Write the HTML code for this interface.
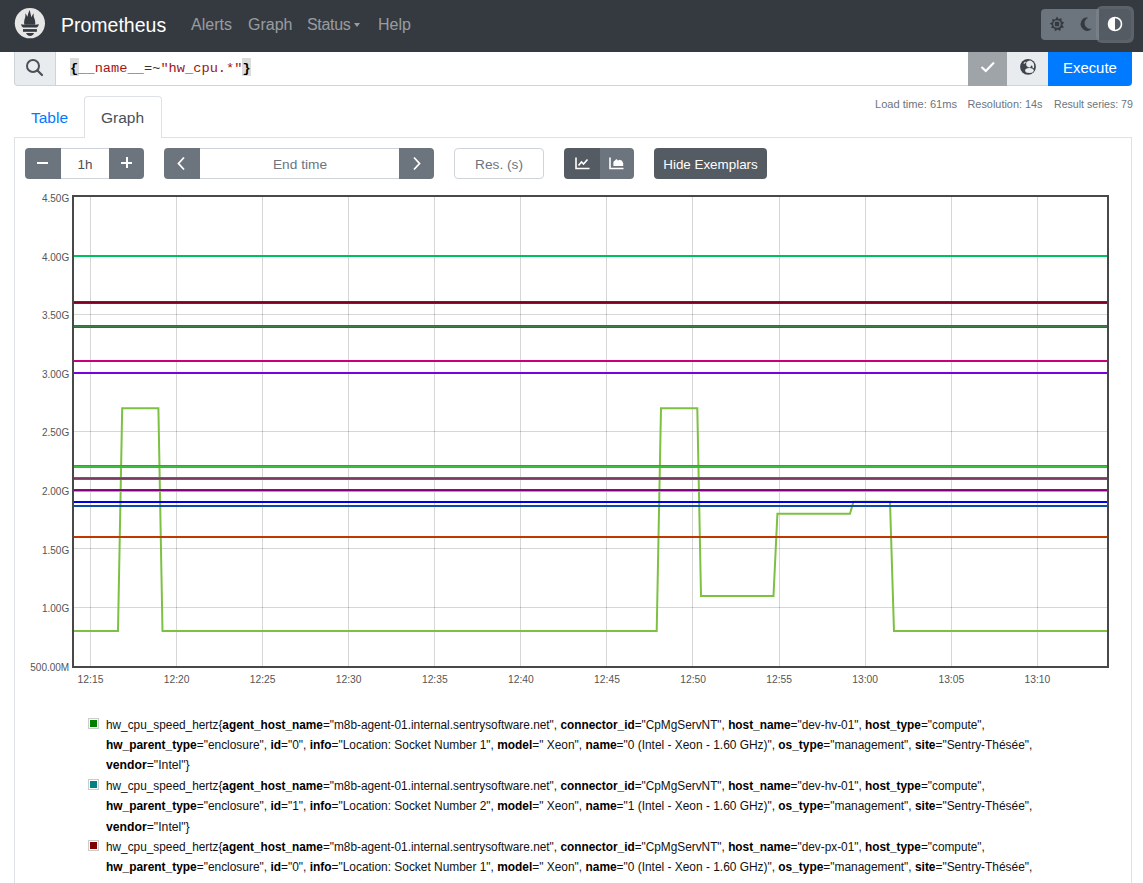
<!DOCTYPE html>
<html><head><meta charset="utf-8">
<style>
*{box-sizing:border-box;margin:0;padding:0}
html,body{width:1143px;height:883px;overflow:hidden;background:#fff;font-family:"Liberation Sans",sans-serif;color:#212529}
.abs{position:absolute}
#nav{position:absolute;left:0;top:0;width:1143px;height:52px;background:#343a40}
.brand{position:absolute;left:61px;top:14px;font-size:19.5px;color:#fff;white-space:nowrap;line-height:22px}
.nl{position:absolute;top:16px;font-size:16px;color:rgba(255,255,255,.5);white-space:nowrap;line-height:18px}
.txt{position:absolute;white-space:nowrap}
.yl{position:absolute;right:1073.8px;font-size:10px;line-height:13px;color:#555;white-space:nowrap;text-align:right}
.xl{position:absolute;top:673px;width:40px;text-align:center;font-size:10.3px;line-height:13px;color:#555;white-space:nowrap}
.btn{position:absolute;background:#6c757d}
.lg{position:absolute;left:105.5px;white-space:nowrap;font-size:12.5px;line-height:20px;color:#111;transform-origin:0 0}
.lg b{color:#000}
.sw{position:absolute;left:88px;width:11px;height:11px;border:1px solid #ccc;padding:1px;background:#fff}
.sw i{display:block;width:7px;height:7px}
</style></head><body>
<div id="nav">
  <svg class="abs" style="left:12px;top:5px" width="36" height="36" viewBox="0 0 36 36">
    <circle cx="17.9" cy="18.2" r="15.1" fill="#e6e6e6"/>
    <path d="M12.3 19.8 C11.8 17 12.5 14 13.3 12 L13.5 8.3 L15.5 11.8 C16 9 16.8 7 17.5 5 C18.2 7 18.8 9 19.3 12.3 L21.5 8.3 L21.8 12 C22.8 14 23.6 17 23.2 19.8 Z" fill="#343a40"/>
    <path d="M9 19.2 L12.3 19.8 L23.2 19.8 L26.9 19.2 C26.5 21 25.5 22.2 24.5 22.6 L11.4 22.6 C10.4 22.2 9.4 21 9 19.2 Z" fill="#343a40"/>
    <rect x="11" y="24.1" width="13.9" height="2.7" fill="#343a40"/>
    <path d="M14.1 28 L22 28 C21.6 29.8 20 30.9 18 30.9 C16 30.9 14.5 29.8 14.1 28 Z" fill="#343a40"/>
  </svg>
  <div class="brand">Prometheus</div>
  <div class="nl" style="left:191px">Alerts</div>
  <div class="nl" style="left:248px">Graph</div>
  <div class="nl" style="left:307px;letter-spacing:-0.3px">Status</div>
  <div class="abs" style="left:354.3px;top:22.6px;width:0;height:0;border-left:3.6px solid transparent;border-right:3.6px solid transparent;border-top:4px solid rgba(255,255,255,.5)"></div>
  <div class="nl" style="left:378px">Help</div>
  <div class="abs" style="left:1041px;top:9px;width:90px;height:31px;background:#6c757d;border-radius:4px"></div>
  <div class="abs" style="left:1096px;top:6px;width:38px;height:37px;border-radius:6px;background:rgba(130,138,145,.5)"></div>
  <div class="abs" style="left:1099px;top:9px;width:32px;height:31px;background:#545b62;border-radius:0 4px 4px 0"></div>
  <svg class="abs" style="left:1049px;top:16px" width="16" height="16" viewBox="0 0 16 16"><path d="M8 0.5 L9.6 3 L12.6 2.3 L12.4 5.3 L15.2 6.5 L13.3 8.8 L14.9 11.4 L11.9 11.9 L11.2 14.9 L8.5 13.4 L6.1 15.2 L5.2 12.3 L2.2 12.1 L3.1 9.2 L0.7 7.4 L3.4 5.9 L3.3 2.9 L6.3 3.4 Z" fill="#343a40"/><circle cx="8" cy="8" r="3.8" fill="#6c757d"/><rect x="5.8" y="5.8" width="4.4" height="4.4" rx="0.8" fill="#343a40"/></svg>
  <svg class="abs" style="left:1080px;top:17px" width="13" height="14" viewBox="0 0 13 14"><path d="M8.5 0.8 A6.5 6.5 0 1 0 12 11.5 A5.2 5.2 0 0 1 8.5 0.8 Z" fill="#343a40"/></svg>
  <svg class="abs" style="left:1107px;top:16px" width="16" height="16" viewBox="0 0 16 16"><circle cx="8" cy="8" r="6.5" fill="#545b62" stroke="#fff" stroke-width="1.6"/><path d="M8 1.5 A6.5 6.5 0 0 0 8 14.5 Z" fill="#fff"/></svg>
</div>

<!-- query input group -->
<div class="abs" style="left:14px;top:52px;width:42px;height:34px;background:#e9ecef;border:1px solid #ced4da;border-top:none;border-radius:0 0 0 4px"></div>
<svg class="abs" style="left:25px;top:58px" width="20" height="20" viewBox="0 0 20 20"><circle cx="8" cy="8" r="6" fill="none" stroke="#495057" stroke-width="2"/><line x1="12.5" y1="12.5" x2="17" y2="17" stroke="#495057" stroke-width="2.2" stroke-linecap="round"/></svg>
<div class="abs" style="left:55px;top:52px;width:914px;height:34px;background:#fff;border-bottom:1px solid #ced4da;border-left:1px solid #ced4da"></div>
<div class="abs" style="left:70px;top:58px;width:9px;height:18px;background:#dcdcdc"></div>
<div class="abs" style="left:242px;top:58px;width:9px;height:18px;background:#dcdcdc"></div>
<div class="txt" style="left:70px;top:60.5px;font-family:'Liberation Mono',monospace;font-size:13.7px;line-height:16px;color:#a31515"><b style="color:#000">{</b>__name__<span style="color:#333">=~</span>"hw_cpu.*"<b style="color:#000">}</b></div>
<div class="abs" style="left:968px;top:52px;width:39px;height:34px;background:#9fa4a9"></div>
<svg class="abs" style="left:978px;top:59px" width="20" height="16" viewBox="0 0 20 16"><path d="M3.5 8 L7.8 12 L16 3.5" fill="none" stroke="#fff" stroke-width="2.1"/></svg>
<div class="abs" style="left:1007px;top:52px;width:41px;height:34px;background:#e9ecef;border-bottom:1px solid #ced4da"></div>
<svg class="abs" style="left:1020px;top:59px" width="16" height="16" viewBox="0 0 16 16"><circle cx="8" cy="7.9" r="7.9" fill="#3d444b"/><path d="M6.3 3.6 C7 2.6 8.5 1.6 10 1.5 C11.5 1.8 12.8 2.8 13.6 4 C14.3 5.5 14.3 7.5 13.9 9.2 L12.6 8.8 L12.3 6.8 L11 6.4 L10.6 8.2 L9.2 8.4 C8 8.3 7.3 7.5 6.6 7 C6.1 6 6.1 4.6 6.3 3.6 Z" fill="#e9ecef"/><ellipse cx="9.4" cy="11.4" rx="4.3" ry="2.5" fill="#e9ecef"/><path d="M3.8 4.6 L5.6 2.8" stroke="#e9ecef" stroke-width="1.1"/></svg>
<div class="abs" style="left:1048px;top:52px;width:84px;height:34px;background:#007bff;border-radius:0 0 4px 0"></div>
<div class="txt" style="left:1063px;top:59px;font-size:14.9px;line-height:18px;color:#fff">Execute</div>

<!-- status -->
<div class="txt" style="left:875px;top:96.5px;font-size:11.1px;line-height:13px;color:#6c757d;margin-top:1px">Load time: 61ms</div>
<div class="txt" style="left:967.5px;top:96.8px;font-size:10.9px;line-height:13px;color:#6c757d;margin-top:1px">Resolution: 14s</div>
<div class="txt" style="left:1054px;top:97px;font-size:10.6px;line-height:13px;color:#6c757d;margin-top:1px">Result series: 79</div>

<!-- tabs -->
<div class="txt" style="left:31px;top:109px;font-size:15.5px;line-height:18px;color:#007bff">Table</div>
<div class="abs" style="left:84px;top:96px;width:78px;height:42px;background:#fff;border:1px solid #dee2e6;border-bottom:none;border-radius:4px 4px 0 0"></div>
<div class="txt" style="left:101px;top:109px;font-size:15.5px;line-height:18px;color:#495057">Graph</div>
<div class="abs" style="left:14px;top:137px;width:70px;height:1px;background:#dee2e6"></div>
<div class="abs" style="left:162px;top:137px;width:970px;height:1px;background:#dee2e6"></div>
<div class="abs" style="left:14px;top:137px;width:1px;height:760px;background:#dee2e6"></div>
<div class="abs" style="left:1131px;top:137px;width:1px;height:760px;background:#dee2e6"></div>

<!-- controls -->
<div class="btn" style="left:25px;top:148px;width:36px;height:31px;border-radius:4px 0 0 4px"></div>
<div class="abs" style="left:37px;top:162px;width:11px;height:2px;background:#fff"></div>
<div class="abs" style="left:61px;top:148px;width:48px;height:31px;border-top:1px solid #ced4da;border-bottom:1px solid #ced4da"></div>
<div class="txt" style="left:61px;top:156.7px;width:48px;text-align:center;font-size:13.5px;line-height:16px;color:#495057">1h</div>
<div class="btn" style="left:109px;top:148px;width:35px;height:31px;border-radius:0 4px 4px 0"></div>
<div class="abs" style="left:121px;top:162px;width:11px;height:2px;background:#fff"></div>
<div class="abs" style="left:125.5px;top:156.7px;width:2px;height:11px;background:#fff"></div>
<div class="btn" style="left:164px;top:148px;width:36px;height:31px;border-radius:4px 0 0 4px"></div>
<svg class="abs" style="left:176px;top:156px" width="10" height="15" viewBox="0 0 10 15"><path d="M8 1.5 L2.5 7.5 L8 13.5" stroke="#fff" stroke-width="1.8" fill="none"/></svg>
<div class="abs" style="left:200px;top:148px;width:200px;height:31px;border-top:1px solid #ced4da;border-bottom:1px solid #ced4da"></div>
<div class="txt" style="left:200px;top:156.7px;width:200px;text-align:center;font-size:13.7px;line-height:16px;color:#6c757d">End time</div>
<div class="btn" style="left:399px;top:148px;width:35px;height:31px;border-radius:0 4px 4px 0"></div>
<svg class="abs" style="left:412px;top:156px" width="10" height="15" viewBox="0 0 10 15"><path d="M2 1.5 L7.5 7.5 L2 13.5" stroke="#fff" stroke-width="1.8" fill="none"/></svg>
<div class="abs" style="left:454px;top:148px;width:90px;height:31px;border:1px solid #ced4da;border-radius:4px"></div>
<div class="txt" style="left:454px;top:156.7px;width:90px;text-align:center;font-size:13.7px;line-height:16px;color:#6c757d">Res. (s)</div>
<div class="abs" style="left:564px;top:148px;width:36px;height:31px;background:#545b62;border-radius:4px 0 0 4px"></div>
<div class="abs" style="left:600px;top:148px;width:34px;height:31px;background:#6c757d;border-radius:0 4px 4px 0"></div>
<svg class="abs" style="left:574.5px;top:157px" width="15" height="13" viewBox="0 0 15 13"><path d="M1 0.5 V11.5 H14.5" stroke="#fff" stroke-width="1.6" fill="none"/><path d="M3.5 8.5 L6.5 5 L8.5 7 L12.5 2.5" stroke="#fff" stroke-width="1.6" fill="none"/></svg>
<svg class="abs" style="left:609px;top:157px" width="15" height="13" viewBox="0 0 15 13"><path d="M1 0.5 V11.5 H14.5" stroke="#fff" stroke-width="1.6" fill="none"/><path d="M4.4 9 V5.3 Q4.6 4 6 3.5 L7.3 2 L9 3.6 L10.7 2.8 Q13.6 3.3 14.2 6.2 V9 Z" fill="#fff"/></svg>
<div class="abs" style="left:654px;top:148px;width:113px;height:31px;background:#545b62;border-radius:4px"></div>
<div class="txt" style="left:654px;top:156.7px;width:113px;text-align:center;font-size:13.4px;line-height:16px;color:#fff">Hide Exemplars</div>
<svg class="abs" style="left:0;top:0" width="1143" height="883" viewBox="0 0 1143 883">
<path d="M90.5 197V666 M176.5 197V666 M262.5 197V666 M348.5 197V666 M434.5 197V666 M520.5 197V666 M606.5 197V666 M692.5 197V666 M779.5 197V666 M865.5 197V666 M951.5 197V666 M1037.5 197V666" stroke="#000" stroke-opacity=".16" stroke-width="1" fill="none"/>
<path d="M74 256.5H1107 M74 314.5H1107 M74 373.5H1107 M74 431.5H1107 M74 490.5H1107 M74 548.5H1107 M74 607.5H1107" stroke="#000" stroke-opacity=".16" stroke-width="1" fill="none"/>
<path d="M74 631 L118 631 L122.2 408.3 L158.4 408.3 L162.5 631 L656.7 631 L661 408.3 L697.3 408.3 L701 595.9 L773.5 595.9 L777.4 513.8 L850 513.8 L853.4 501.8 L890 501.8 L894 631 L1107 631" stroke="#7dc142" stroke-width="2" fill="none" stroke-linejoin="miter"/>
<path d="M74 255.5H1107" stroke="#00bf60" stroke-width="1" fill="none"/>
<path d="M74 256.5H1107" stroke="#00bf60" stroke-width="1" fill="none"/>
<path d="M74 301.5H1107" stroke="#4b3048" stroke-width="1" fill="none"/>
<path d="M74 302.5H1107" stroke="#800022" stroke-width="1" fill="none"/>
<path d="M74 303.5H1107" stroke="#4b3048" stroke-width="1" fill="none"/>
<path d="M74 325.5H1107" stroke="#307535" stroke-width="1" fill="none"/>
<path d="M74 326.5H1107" stroke="#3f7f45" stroke-width="1" fill="none"/>
<path d="M74 327.5H1107" stroke="#347800" stroke-width="1" fill="none"/>
<path d="M74 360.5H1107" stroke="#c8007e" stroke-width="1" fill="none"/>
<path d="M74 361.5H1107" stroke="#c8007e" stroke-width="1" fill="none"/>
<path d="M74 372.5H1107" stroke="#7a00e0" stroke-width="1" fill="none"/>
<path d="M74 373.5H1107" stroke="#7a00e0" stroke-width="1" fill="none"/>
<path d="M74 465.5H1107" stroke="#707a72" stroke-width="1" fill="none"/>
<path d="M74 466.5H1107" stroke="#3cbf3c" stroke-width="1" fill="none"/>
<path d="M74 467.5H1107" stroke="#3cb83c" stroke-width="1" fill="none"/>
<path d="M74 477.5H1107" stroke="#4a6a9a" stroke-width="1" fill="none"/>
<path d="M74 478.5H1107" stroke="#7a3a60" stroke-width="1" fill="none"/>
<path d="M74 479.5H1107" stroke="#4a6a9a" stroke-width="1" fill="none"/>
<path d="M74 489.5H1107" stroke="#880a88" stroke-width="1" fill="none"/>
<path d="M74 490.5H1107" stroke="#800080" stroke-width="1" fill="none"/>
<path d="M74 491.5H1107" stroke="#c09a90" stroke-width="1" fill="none"/>
<path d="M74 501.5H1107" stroke="#0000e0" stroke-width="1" fill="none"/>
<path d="M74 502.5H1107" stroke="#0000e0" stroke-width="1" fill="none"/>
<path d="M74 505.5H1107" stroke="#0050b8" stroke-width="1" fill="none"/>
<path d="M74 506.5H1107" stroke="#1048a8" stroke-width="1" fill="none"/>
<path d="M74 536.5H1107" stroke="#c03800" stroke-width="1" fill="none"/>
<path d="M74 537.5H1107" stroke="#c03800" stroke-width="1" fill="none"/>
<rect x="73" y="196" width="1035" height="471" stroke="#484848" stroke-width="2" fill="none"/>
</svg>
<div class="yl" style="top:192.0px">4.50G</div>
<div class="yl" style="top:250.6px">4.00G</div>
<div class="yl" style="top:309.2px">3.50G</div>
<div class="yl" style="top:367.8px">3.00G</div>
<div class="yl" style="top:426.4px">2.50G</div>
<div class="yl" style="top:485.0px">2.00G</div>
<div class="yl" style="top:543.6px">1.50G</div>
<div class="yl" style="top:602.2px">1.00G</div>
<div class="yl" style="top:660.8px">500.00M</div>
<div class="xl" style="left:70.5px">12:15</div>
<div class="xl" style="left:156.6px">12:20</div>
<div class="xl" style="left:242.7px">12:25</div>
<div class="xl" style="left:328.7px">12:30</div>
<div class="xl" style="left:414.8px">12:35</div>
<div class="xl" style="left:500.9px">12:40</div>
<div class="xl" style="left:587.0px">12:45</div>
<div class="xl" style="left:673.1px">12:50</div>
<div class="xl" style="left:759.1px">12:55</div>
<div class="xl" style="left:845.2px">13:00</div>
<div class="xl" style="left:931.3px">13:05</div>
<div class="xl" style="left:1017.4px">13:10</div>
<!-- legend -->
<div class="sw" style="top:717.9px"><i style="background:#008000"></i></div>
<div class="lg" style="top:715.1px;transform:scaleX(0.946)">hw_cpu_speed_hertz{<b>agent_host_name</b>="m8b-agent-01.internal.sentrysoftware.net", <b>connector_id</b>="CpMgServNT", <b>host_name</b>="dev-hv-01", <b>host_type</b>="compute",</div>
<div class="lg" style="top:735.2px;transform:scaleX(0.953)"><b>hw_parent_type</b>="enclosure", <b>id</b>="0", <b>info</b>="Location: Socket Number 1", <b>model</b>=" Xeon", <b>name</b>="0 (Intel - Xeon - 1.60 GHz)", <b>os_type</b>="management", <b>site</b>="Sentry-Thésée",</div>
<div class="lg" style="top:755.3px;transform:scaleX(0.977)"><b>vendor</b>="Intel"}</div>
<div class="sw" style="top:779.1px"><i style="background:#008080"></i></div>
<div class="lg" style="top:776.3px;transform:scaleX(0.946)">hw_cpu_speed_hertz{<b>agent_host_name</b>="m8b-agent-01.internal.sentrysoftware.net", <b>connector_id</b>="CpMgServNT", <b>host_name</b>="dev-hv-01", <b>host_type</b>="compute",</div>
<div class="lg" style="top:796.4px;transform:scaleX(0.953)"><b>hw_parent_type</b>="enclosure", <b>id</b>="1", <b>info</b>="Location: Socket Number 2", <b>model</b>=" Xeon", <b>name</b>="1 (Intel - Xeon - 1.60 GHz)", <b>os_type</b>="management", <b>site</b>="Sentry-Thésée",</div>
<div class="lg" style="top:816.5px;transform:scaleX(0.977)"><b>vendor</b>="Intel"}</div>
<div class="sw" style="top:840.1px"><i style="background:#800000"></i></div>
<div class="lg" style="top:837.3px;transform:scaleX(0.946)">hw_cpu_speed_hertz{<b>agent_host_name</b>="m8b-agent-01.internal.sentrysoftware.net", <b>connector_id</b>="CpMgServNT", <b>host_name</b>="dev-px-01", <b>host_type</b>="compute",</div>
<div class="lg" style="top:857.4px;transform:scaleX(0.953)"><b>hw_parent_type</b>="enclosure", <b>id</b>="0", <b>info</b>="Location: Socket Number 1", <b>model</b>=" Xeon", <b>name</b>="0 (Intel - Xeon - 1.60 GHz)", <b>os_type</b>="management", <b>site</b>="Sentry-Thésée",</div>
<div class="lg" style="top:877.5px;transform:scaleX(0.977)"><b>vendor</b>="Intel"}</div>
</body></html>
